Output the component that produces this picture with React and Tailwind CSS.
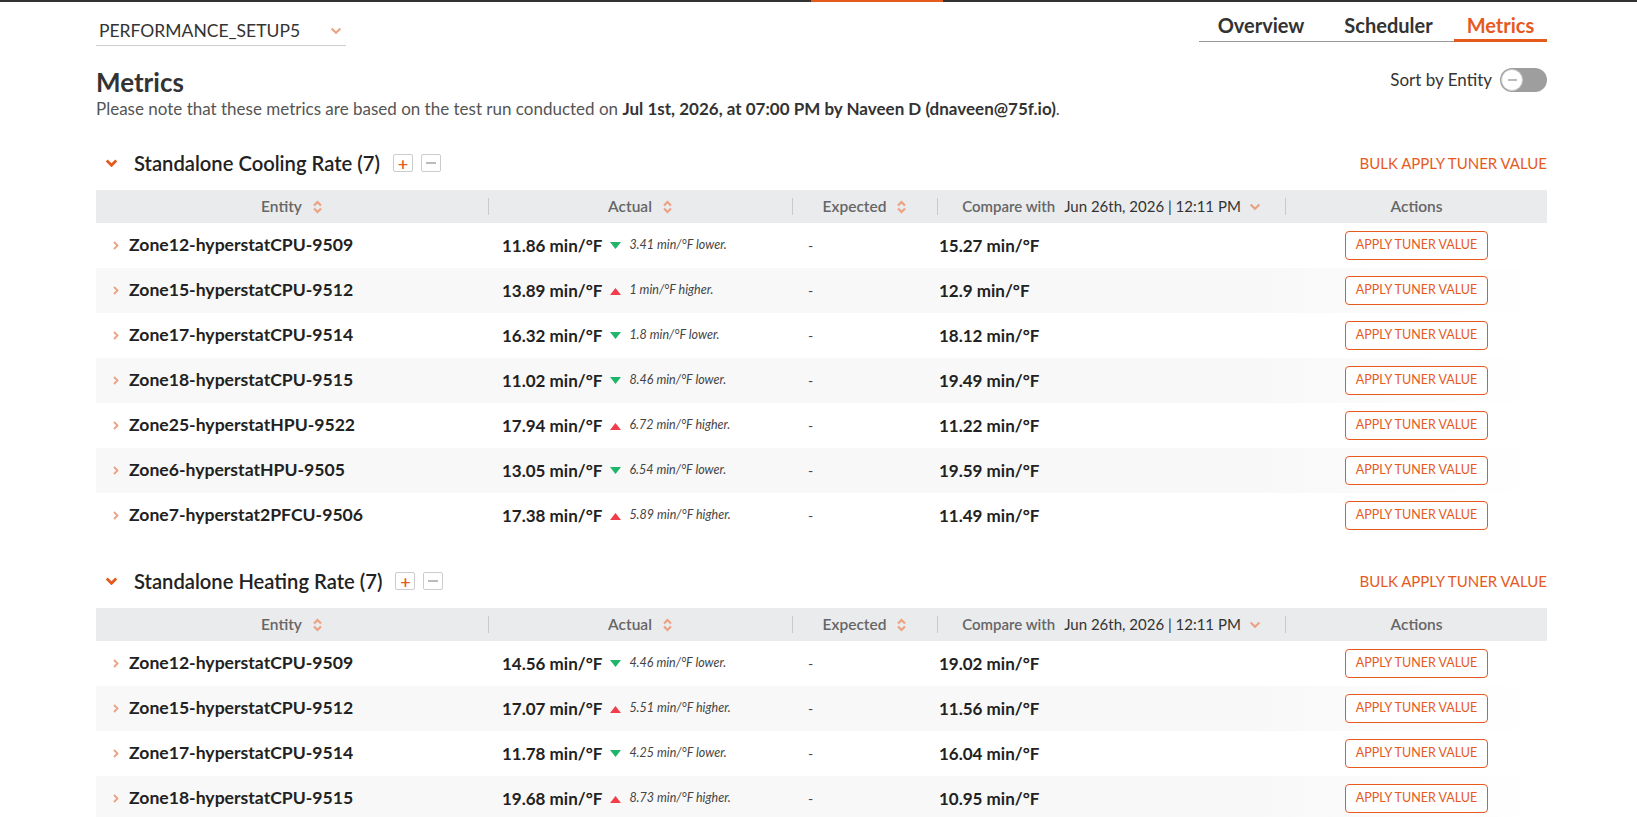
import React from 'react';

const cooling = [
  { name: 'Zone12-hyperstatCPU-9509', actual: '11.86', dir: 'down', diff: '3.41', compare: '15.27' },
  { name: 'Zone15-hyperstatCPU-9512', actual: '13.89', dir: 'up', diff: '1', compare: '12.9' },
  { name: 'Zone17-hyperstatCPU-9514', actual: '16.32', dir: 'down', diff: '1.8', compare: '18.12' },
  { name: 'Zone18-hyperstatCPU-9515', actual: '11.02', dir: 'down', diff: '8.46', compare: '19.49' },
  { name: 'Zone25-hyperstatHPU-9522', actual: '17.94', dir: 'up', diff: '6.72', compare: '11.22' },
  { name: 'Zone6-hyperstatHPU-9505', actual: '13.05', dir: 'down', diff: '6.54', compare: '19.59' },
  { name: 'Zone7-hyperstat2PFCU-9506', actual: '17.38', dir: 'up', diff: '5.89', compare: '11.49' },
];

const heating = [
  { name: 'Zone12-hyperstatCPU-9509', actual: '14.56', dir: 'down', diff: '4.46', compare: '19.02' },
  { name: 'Zone15-hyperstatCPU-9512', actual: '17.07', dir: 'up', diff: '5.51', compare: '11.56' },
  { name: 'Zone17-hyperstatCPU-9514', actual: '11.78', dir: 'down', diff: '4.25', compare: '16.04' },
  { name: 'Zone18-hyperstatCPU-9515', actual: '19.68', dir: 'up', diff: '8.73', compare: '10.95' },
];

const SortIcon = () => (
  <svg width="11" height="16" viewBox="0 0 11 16" className="ml-[10px]">
    <path d="M2 6.5 L5.5 3 L9 6.5" fill="none" stroke="#eba283" strokeWidth="2.2" />
    <path d="M2 9.5 L5.5 13 L9 9.5" fill="none" stroke="#eba283" strokeWidth="2.2" />
  </svg>
);

const ChevronDown = ({ color = '#eba283', w = 12, sw = 2.2 }) => (
  <svg width={w} height={w * 0.65} viewBox="0 0 12 8">
    <path d="M1.5 1.5 L6 6 L10.5 1.5" fill="none" stroke={color} strokeWidth={sw} />
  </svg>
);

const Sep = () => <div className="w-px h-[17px] bg-[#c9cacc]" />;

function HeaderRow() {
  return (
    <div className="flex items-center h-[33px] bg-[#eaebed] text-[15px] font-semibold text-[#666]">
      <div className="w-[392px] flex items-center justify-center text-[15.5px]">Entity<SortIcon /></div>
      <Sep />
      <div className="w-[303px] flex items-center justify-center text-[15.5px]">Actual<SortIcon /></div>
      <Sep />
      <div className="w-[144px] flex items-center justify-center text-[15.5px]">Expected<SortIcon /></div>
      <Sep />
      <div className="w-[347px] flex items-center justify-center">
        Compare with
        <span className="ml-[9px] font-normal text-[#333]">Jun 26th, 2026 | 12:11 PM</span>
        <span className="ml-[8px]"><ChevronDown /></span>
      </div>
      <Sep />
      <div className="flex-1 flex items-center justify-center text-[15.5px]">Actions</div>
    </div>
  );
}

function Row({ r, striped }) {
  return (
    <div className={`grid grid-cols-[393px_304px_145px_348px_1fr] items-center h-[45px] ${striped ? 'bg-[linear-gradient(to_right,#f8f8f8_80%,#ffffff)]' : 'bg-white'}`}>
      <div className="flex items-center pl-[16px]">
        <svg width="8" height="11" viewBox="0 0 8 11">
          <path d="M2 2 L5.5 5.5 L2 9" fill="none" stroke="#eba283" strokeWidth="1.8" />
        </svg>
        <span className="ml-[9px] text-[17.6px] font-bold text-[#222]">{r.name}</span>
      </div>
      <div className="flex items-center pl-[13px]">
        <span className="text-[17px] font-bold text-[#222]">{r.actual} min/°F</span>
        {r.dir === 'down' ? (
          <svg width="11" height="8" viewBox="0 0 11 8" className="ml-[8px]"><path d="M0 0 L11 0 L5.5 7 Z" fill="#1fb56a" /></svg>
        ) : (
          <svg width="11" height="8" viewBox="0 0 11 8" className="ml-[8px]"><path d="M0 8 L11 8 L5.5 1 Z" fill="#f23d4a" /></svg>
        )}
        <span className="ml-[8px] text-[12.5px] italic text-[#444]">{r.diff} min/°F {r.dir === 'down' ? 'lower.' : 'higher.'}</span>
      </div>
      <div className="pl-[15px] text-[14px] text-[#444]">-</div>
      <div className="pl-[1px] text-[17px] font-bold text-[#222]">{r.compare} min/°F</div>
      <div className="flex justify-center">
        <button className="w-[143px] h-[29px] border border-[#e65a1e] rounded-[4px] text-[12.5px] text-[#e65a1e] bg-white">APPLY TUNER VALUE</button>
      </div>
    </div>
  );
}

function Section({ title, rows }) {
  return (
    <div>
      <div className="flex items-center justify-between h-[34px] mb-[10px]">
        <div className="flex items-center">
          <span className="ml-[9px]"><ChevronDown color="#e65a1e" w={13} sw={2.6} /></span>
          <span className="ml-[16px] text-[20.2px] font-semibold text-[#222]">{title}</span>
          <span className="ml-[13px] w-[20px] h-[18px] border border-[#ccc] rounded-[2px] flex items-center justify-center text-[#e65a1e] text-[18px] leading-none font-semibold">+</span>
          <span className="ml-[8px] w-[20px] h-[18px] border border-[#ccc] rounded-[2px] flex items-center justify-center">
            <span className="w-[10px] h-[2px] bg-[#bbb]" />
          </span>
        </div>
        <button className="text-[15px] text-[#e65a1e]">BULK APPLY TUNER VALUE</button>
      </div>
      <HeaderRow />
      {rows.map((r, i) => <Row key={r.name} r={r} striped={i % 2 === 1} />)}
    </div>
  );
}

export default function App() {
  return (
    <div className="min-h-screen bg-white font-['Lato','Liberation_Sans',sans-serif] text-[#333]">
      <div className="flex h-[2px]">
        <div className="w-[811px] bg-[#333]" />
        <div className="w-[132px] bg-[#e65a1e]" />
        <div className="flex-1 bg-[#333]" />
      </div>
      <div className="ml-[96px] mr-[90px]">
        <div className="flex justify-between items-start">
          <div className="mt-[18px] w-[250px] flex items-center justify-between pl-[3px] pr-[4px] pb-[3px] border-b border-[#cfcfcf]">
            <span className="text-[17.5px] leading-[22px] text-[#333]">PERFORMANCE_SETUP5</span>
            <ChevronDown />
          </div>
          <div className="flex items-end border-b border-[#999]">
            <div className="w-[124px] text-center pt-[9px] pb-[2px] text-[20px] leading-[28px] font-bold text-[#333]">Overview</div>
            <div className="w-[131px] text-center pt-[9px] pb-[2px] text-[20px] leading-[28px] font-bold text-[#333]">Scheduler</div>
            <div className="w-[93px] text-center pt-[9px] pb-0 -mb-px border-b-[3px] border-[#e65a1e] text-[20px] leading-[28px] font-bold text-[#e65a1e]">Metrics</div>
          </div>
        </div>
        <div className="flex justify-between items-start mt-[21px]">
          <div>
            <h1 className="text-[26px] leading-[30px] font-bold text-[#333]">Metrics</h1>
            <p className="text-[17px] leading-[24px] text-[#555]">
              Please note that these metrics are based on the test run conducted on <span className="font-bold text-[#333]">Jul 1st, 2026, at 07:00 PM by Naveen D (dnaveen@75f.io)</span>.
            </p>
          </div>
          <div className="flex items-center">
            <span className="text-[17px] text-[#333]">Sort by Entity</span>
            <div className="ml-[8px] w-[47px] h-[24px] rounded-full bg-[#9e9e9e] flex items-center pl-[1px]">
              <div className="w-[22px] h-[22px] rounded-full bg-white border border-[#ccc] flex items-center justify-center">
                <span className="w-[9px] h-[2px] bg-[#bbb]" />
              </div>
            </div>
          </div>
        </div>
        <div className="mt-[25px]">
          <Section title="Standalone Cooling Rate (7)" rows={cooling} />
        </div>
        <div className="mt-[26px]">
          <Section title="Standalone Heating Rate (7)" rows={heating} />
        </div>
      </div>
    </div>
  );
}
